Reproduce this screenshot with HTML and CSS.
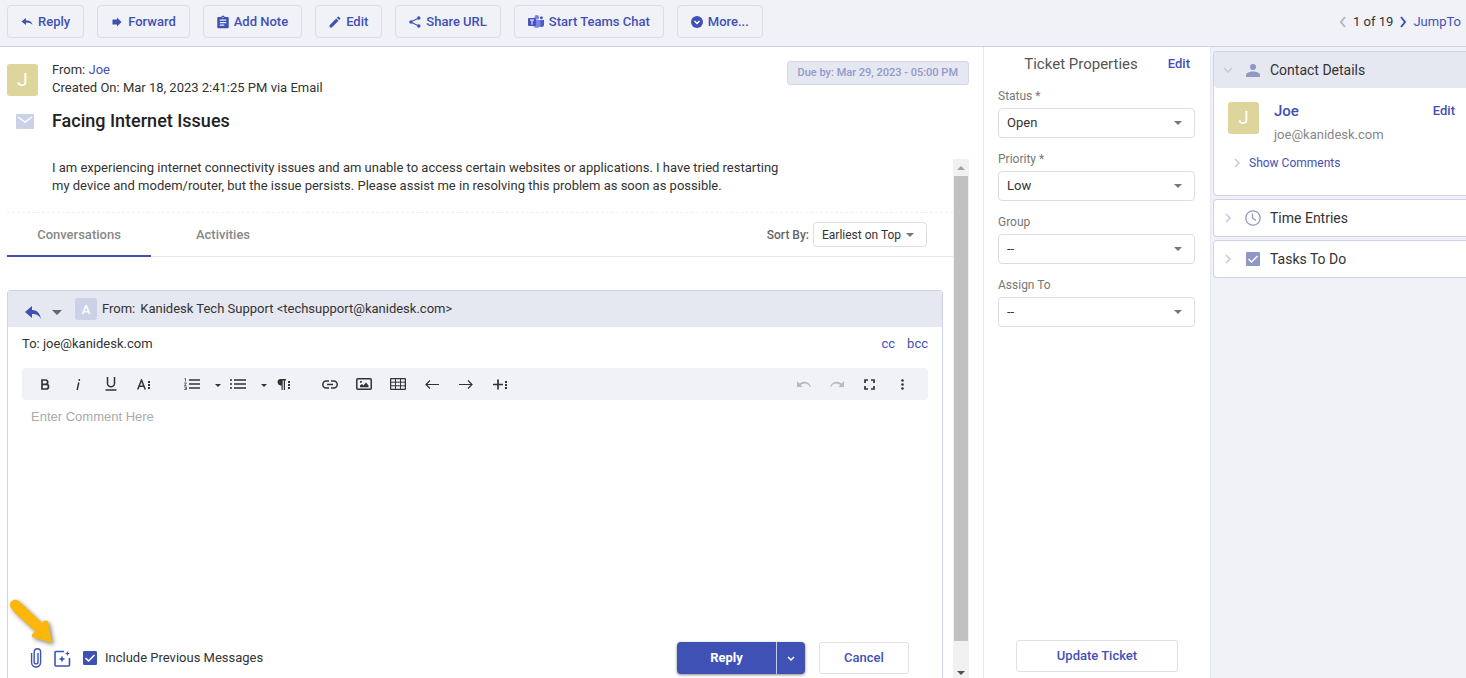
FILE: index.html
```html
<!DOCTYPE html>
<html lang="en">
<head>
    <meta charset="UTF-8">
    <meta name="viewport" content="width=device-width, initial-scale=1.0">
    <title>Facing Internet Issues - Kanidesk</title>
    <link rel="stylesheet" href="styles.css">
</head>
<body>
    <header class="topbar">
        <div class="actions">
            <button class="btn"><svg class="icon" width="12" height="12" viewBox="0 0 24 24"><path d="M10 9V4L1 11l9 7v-5c6 0 10 1.500 13 5-1-5-4-9-13-9z"/></svg>Reply</button>
            <button class="btn"><svg class="icon" width="12" height="12" viewBox="0 0 24 24"><path d="M3 7h9V3l9 9-9 9v-4H3z"/></svg>Forward</button>
            <button class="btn"><svg class="icon" width="12" height="14" viewBox="3 0 18 22"><path d="M19 3h-4.200C14.400 1.800 13.300 1 12 1s-2.400.8-2.800 2H5c-1.100 0-2 .9-2 2v14c0 1.100.9 2 2 2h14c1.100 0 2-.9 2-2V5c0-1.100-.9-2-2-2zm-7 0a1 1 0 1 1 0 2 1 1 0 0 1 0-2zm2 14H7v-2h7v2zm3-4H7v-2h10v2zm0-4H7V7h10v2z"/></svg>Add Note</button>
            <button class="btn"><svg class="icon" width="12" height="12" viewBox="2 2 20 20"><path d="M3 17.250V21h3.750L17.810 9.940l-3.750-3.750L3 17.250zM20.710 7.040a1 1 0 0 0 0-1.410l-2.340-2.340a1 1 0 0 0-1.410 0l-1.830 1.830 3.750 3.750 1.830-1.830z"/></svg>Edit</button>
            <button class="btn"><svg class="icon" width="12" height="12" viewBox="1 1 22 22"><path d="M4 12L19 4.500M4 12l15 7.500" stroke="currentColor" stroke-width="2"/><circle cx="4.500" cy="12" r="3"/><circle cx="19" cy="4.800" r="3.200"/><circle cx="19" cy="19.200" r="3.200"/></svg>Share URL</button>
            <button class="btn"><svg class="icon teams" width="16" height="14" viewBox="0 0 16 14"><circle cx="13.400" cy="2.800" r="1.500" fill="#5059c9"/><path d="M11 5h5v4.500a2.500 2.500 0 0 1-5 0z" fill="#5059c9"/><circle cx="8.800" cy="2.300" r="2.300" fill="#7b83eb"/><path d="M5 5h7.500v5a3.900 3.900 0 0 1-7.500 0z" fill="#7b83eb"/><rect y="3" width="8" height="8" rx="1" fill="#4b53bc"/><path d="M2 5h4M4 5v4.500" stroke="#fff"/></svg>Start Teams Chat</button>
            <button class="btn"><svg class="icon" width="12" height="12" viewBox="0 0 12 12"><circle cx="6" cy="6" r="6"/><path d="M3.500 5L6 7.500 8.500 5" fill="none" stroke="#fff" stroke-width="1.500"/></svg>More...</button>
        </div>
        <nav class="pager">
            <button class="plain prev" aria-label="Previous ticket"><svg width="8" height="12" viewBox="0 0 8 12"><path d="M6 1L2 6l4 5"/></svg></button>
            <span>1 of 19</span>
            <button class="plain next" aria-label="Next ticket"><svg width="8" height="12" viewBox="0 0 8 12"><path d="M2 1l4 5-4 5"/></svg></button>
            <a href="#">JumpTo</a>
        </nav>
    </header>

    <div class="page">
        <main class="ticket">
            <div class="ticket-head">
                <div class="avatar">J</div>
                <div class="ticket-meta">
                    <div>From: <a href="#">Joe</a></div>
                    <div>Created On: Mar 18, 2023 2:41:25 PM via Email</div>
                </div>
                <span class="due">Due by: Mar 29, 2023 - 05:00 PM</span>
            </div>
            <div class="ticket-title">
                <svg width="18" height="15" viewBox="0 0 18 15"><rect width="18" height="15" rx="1" fill="#cdd1e8"/><path d="M2 3l7 5 7-5" fill="none" stroke="#fff" stroke-width="1.500"/></svg>
                <h1>Facing Internet Issues</h1>
            </div>

            <div class="scroll-area">
                <div class="scroll-content">
                    <p class="description">I am experiencing internet connectivity issues and am unable to access certain websites or applications. I have tried restarting my device and modem/router, but the issue persists. Please assist me in resolving this problem as soon as possible.</p>

                    <div class="tabs">
                        <button class="tab active">Conversations</button>
                        <button class="tab">Activities</button>
                        <div class="sort">
                            <label for="sort">Sort By:</label>
                            <div class="select sort-select">
                                <select id="sort"><option>Earliest on Top</option></select>
                                <svg width="8" height="4" viewBox="0 0 8 4"><path d="M0 0h8L4 4z"/></svg>
                            </div>
                        </div>
                    </div>

                    <section class="composer">
                        <div class="composer-head">
                            <button class="plain" aria-label="Reply type"><svg width="16" height="13" viewBox="0 0 16 13" fill="#3f51b5"><path d="M7 4V0L0 6l7 6V8c4 0 7 1 9 5-1-5-3-9-9-9z"/></svg></button>
                            <button class="plain" aria-label="Choose reply type"><svg width="10" height="5" viewBox="0 0 10 5" fill="#666"><path d="M0 0h10L5 5z"/></svg></button>
                            <div class="agent">A</div>
                            <span>From:</span>
                            <span>Kanidesk Tech Support &lt;techsupport@kanidesk.com&gt;</span>
                        </div>
                        <div class="composer-to">
                            <span>To: joe@kanidesk.com</span>
                            <a href="#" class="cc">cc</a>
                            <a href="#">bcc</a>
                        </div>

                        <div class="toolbar">
                            <div class="tools">
                                <button aria-label="Bold"><svg width="10" height="11" viewBox="0 0 10 11" fill="none" stroke="#333" stroke-width="1.700"><path d="M2 1h3.500a2.200 2.200 0 0 1 0 4.400H2zM2 5.400h4.200a2.300 2.300 0 0 1 0 4.600H2z"/></svg></button>
                                <button aria-label="Italic"><svg width="6" height="11" viewBox="0 0 6 11" fill="none" stroke="#333" stroke-width="1.500"><path d="M3.800 3.500L2.200 11M4.500 0L4.100 1.800"/></svg></button>
                                <button aria-label="Underline"><svg width="12" height="14" viewBox="0 0 12 14" fill="none" stroke="#333" stroke-width="1.500"><path d="M2.500 0v6.200a3.500 3.500 0 0 0 7 0V0M.5 13h11"/></svg></button>
                                <button aria-label="More text"><svg width="14" height="11" viewBox="0 0 14 11" fill="none" stroke="#333" stroke-width="1.500"><path d="M.7 10.500L4.500 1 8.300 10.500M2 7.300h5"/><path d="M11 3h2M11 6h2M11 9h2" stroke-width="2"/></svg></button>
                            </div>
                            <div class="tools lists">
                                <button aria-label="Ordered list"><svg width="16" height="12" viewBox="0 0 16 12" fill="none" stroke="#333"><path d="M5 2h11M5 6h11M5 10h11" stroke-width="1.500"/><path d="M.5.500h1v3M0 5h2.500L.5 7.500h2M0 9h2.500v2.500H0M1 10.300h1.500" stroke-width=".7"/></svg></button>
                                <button class="caret" aria-label="Ordered list style"><svg width="6" height="3" viewBox="0 0 6 3"><path d="M0 0h6L3 3z"/></svg></button>
                                <button aria-label="Unordered list"><svg width="16" height="12" viewBox="0 0 16 12" stroke="#333"><path d="M4 2h12M4 6h12M4 10h12M0 2h2M0 6h2M0 10h2" stroke-width="1.500"/></svg></button>
                                <button class="caret" aria-label="Unordered list style"><svg width="6" height="3" viewBox="0 0 6 3"><path d="M0 0h6L3 3z"/></svg></button>
                                <button class="para" aria-label="More paragraph"><svg width="14" height="11" viewBox="0 0 14 11"><path d="M3.200 0H9v1.500H8V11H6.800V1.500H5.700V11H4.500V6.400A3.200 3.200 0 0 1 3.200 0z"/><path d="M11 2h2v2h-2zM11 5h2v2h-2zM11 8h2v2h-2z"/></svg></button>
                            </div>
                            <div class="tools insert">
                                <button aria-label="Insert link"><svg width="16" height="9" viewBox="0 0 16 9" fill="none" stroke="#333" stroke-width="1.500"><path d="M7 1H4.300a3.400 3.400 0 0 0 0 7H7M9 1h2.700a3.400 3.400 0 0 1 0 7H9M5 4.500h6"/></svg></button>
                                <button aria-label="Insert image"><svg width="16" height="12" viewBox="0 0 16 12"><rect x=".75" y=".75" width="14.500" height="10.500" rx="1" fill="none" stroke="#333" stroke-width="1.500"/><path d="M4 9.200V7.500L6 6l1.500 1.500L10 4.500l2.500 3v1.700z"/><path d="M4 3h1.800v1.800H4z"/></svg></button>
                                <button aria-label="Insert table"><svg width="16" height="12" viewBox="0 0 16 12" fill="none" stroke="#333"><rect x=".6" y=".6" width="14.800" height="10.800" rx="1" stroke-width="1.300"/><path d="M0 4.200h16M0 7.800h16M5.500 0v12M10.500 0v12"/></svg></button>
                                <button aria-label="Left to right"><svg width="14" height="9" viewBox="0 0 14 9" fill="none" stroke="#333" stroke-width="1.200"><path d="M1 4.500h13M5 .5l-4 4 4 4"/></svg></button>
                                <button aria-label="Right to left"><svg width="14" height="9" viewBox="0 0 14 9" fill="none" stroke="#333" stroke-width="1.200"><path d="M0 4.500h13M9 .5l4 4-4 4"/></svg></button>
                                <button aria-label="More rich"><svg width="15" height="11" viewBox="0 0 15 11" fill="none" stroke="#333" stroke-width="1.700"><path d="M0 5.500h10M5 .5v10"/><path d="M12 3h2M12 6h2M12 9h2" stroke-width="2"/></svg></button>
                            </div>
                            <div class="tools tools-right">
                                <button disabled aria-label="Undo"><svg width="14" height="6" viewBox="0 0 14 6"><path d="M0 0v6h5.500L3.600 4C7 1.500 11 2 13 6l1-.5C12 .5 6.500-.8 2.400 2.600z"/></svg></button>
                                <button disabled aria-label="Redo"><svg width="14" height="6" viewBox="0 0 14 6"><path d="M14 0v6H8.500l1.900-2C7 1.500 3 2 1 6L0 5.500C2 .5 7.500-.8 11.600 2.600z"/></svg></button>
                                <button aria-label="Fullscreen"><svg width="11" height="11" viewBox="0 0 11 11" fill="none" stroke="#333" stroke-width="1.700"><path d="M1 4V1h3M7 1h3v3M10 7v3H7M4 10H1V7"/></svg></button>
                                <button aria-label="More misc"><svg width="3" height="11" viewBox="0 0 3 11"><circle cx="1.500" cy="1.500" r="1.300"/><circle cx="1.500" cy="5.500" r="1.300"/><circle cx="1.500" cy="9.500" r="1.300"/></svg></button>
                            </div>
                        </div>
                        <textarea class="comment" placeholder="Enter Comment Here" aria-label="Comment"></textarea>

                        <div class="composer-foot">
                            <button class="plain" aria-label="Attach file"><svg width="12" height="20" viewBox="0 0 12 20" fill="none" stroke="#3f51b5" stroke-width="1.400"><path d="M8 5v9a1.900 1.900 0 0 1-3.800 0V4a3.200 3.200 0 0 1 6.400 0v10.500a4.500 4.500 0 0 1-9 0V5"/></svg></button>
                            <button class="plain ai" aria-label="AI assistant">
                                <svg width="17" height="17" viewBox="0 0 17 17" fill="#3f51b5"><path d="M10 1.500H2a1 1 0 0 0-1 1V15a1 1 0 0 0 1 1h12.500a1 1 0 0 0 1-1V8" fill="none" stroke="#3f51b5" stroke-width="1.600"/><path d="M8 5.500l1 2.500 2.500 1L9 10l-1 2.500L7 10 4.500 9 7 8zM13.500 1l.7 1.800 1.800.7-1.800.7-.7 1.800-.7-1.800-1.800-.7 1.800-.7z"/></svg>
                                <!-- pointer to the AI button -->
                                <svg class="pointer" width="48" height="46" viewBox="0 0 48 46"><path d="M3 9C0 5 4 0 8 1c2 0 4 2 6 4l20 19c1-3 4-3 6-2l4 22-20-6c-1-2 1-5 4-5L8 15z" fill="#fdb70b"/></svg>
                            </button>
                            <label class="include">
                                <input type="checkbox" checked>
                                <svg width="14" height="14" viewBox="0 0 14 14" fill="none" stroke="#fff" stroke-width="1.500"><path d="M2.500 7l3 3 6-6"/></svg>
                                Include Previous Messages
                            </label>
                            <div class="split">
                                <button class="reply">Reply</button>
                                <button class="reply-more" aria-label="More reply options"><svg width="8" height="6" viewBox="0 0 8 6" fill="none" stroke="#fff" stroke-width="1.500"><path d="M1 1l3 3 3-3"/></svg></button>
                            </div>
                            <button class="btn-white cancel">Cancel</button>
                        </div>
                    </section>
                </div>
                <div class="scrollbar">
                    <svg width="8" height="4" viewBox="0 0 8 4" fill="#a3a3a3"><path d="M0 4h8L4 0z"/></svg>
                    <div class="thumb"></div>
                    <svg width="8" height="4" viewBox="0 0 8 4" fill="#505050"><path d="M0 0h8L4 4z"/></svg>
                </div>
            </div>
        </main>

        <aside class="properties">
            <div class="properties-head">
                <h2>Ticket Properties</h2>
                <a href="#">Edit</a>
            </div>
            <div class="field">
                <label for="status">Status *</label>
                <div class="select">
                    <select id="status"><option>Open</option></select>
                    <svg width="8" height="4" viewBox="0 0 8 4"><path d="M0 0h8L4 4z"/></svg>
                </div>
            </div>
            <div class="field">
                <label for="priority">Priority *</label>
                <div class="select">
                    <select id="priority"><option>Low</option></select>
                    <svg width="8" height="4" viewBox="0 0 8 4"><path d="M0 0h8L4 4z"/></svg>
                </div>
            </div>
            <div class="field">
                <label for="group">Group</label>
                <div class="select">
                    <select id="group"><option>--</option></select>
                    <svg width="8" height="4" viewBox="0 0 8 4"><path d="M0 0h8L4 4z"/></svg>
                </div>
            </div>
            <div class="field">
                <label for="assign">Assign To</label>
                <div class="select">
                    <select id="assign"><option>--</option></select>
                    <svg width="8" height="4" viewBox="0 0 8 4"><path d="M0 0h8L4 4z"/></svg>
                </div>
            </div>
            <button class="btn-white update">Update Ticket</button>
        </aside>

        <aside class="sidebar">
            <section class="card">
                <button class="card-head open">
                    <svg class="chev" width="10" height="6" viewBox="0 0 10 6"><path d="M1 1l4 4 4-4"/></svg>
                    <svg width="16" height="13" viewBox="0 0 16 13" fill="#8f97c9"><circle cx="8" cy="3" r="3"/><path d="M1 13v-2c0-2 4-3.500 7-3.500s7 1.500 7 3.500v2z"/></svg>
                    Contact Details
                </button>
                <div class="contact">
                    <div class="avatar">J</div>
                    <div class="contact-info">
                        <a href="#" class="name">Joe</a>
                        <div class="email">joe@kanidesk.com</div>
                    </div>
                    <a href="#" class="contact-edit">Edit</a>
                </div>
                <button class="plain comments">
                    <svg class="chev" width="6" height="10" viewBox="0 0 6 10"><path d="M1 1l4 4-4 4"/></svg>
                    Show Comments
                </button>
            </section>
            <section class="card">
                <button class="card-head">
                    <svg class="chev" width="10" height="10" viewBox="-2 0 10 10"><path d="M1 1l4 4-4 4"/></svg>
                    <svg width="16" height="16" viewBox="0 0 16 16" fill="none" stroke="#8f97c9" stroke-width="1.300"><circle cx="8" cy="8" r="7.200"/><path d="M7.500 3.500V8l3.500 2.500"/></svg>
                    Time Entries
                </button>
            </section>
            <section class="card">
                <button class="card-head">
                    <svg class="chev" width="10" height="10" viewBox="-2 0 10 10"><path d="M1 1l4 4-4 4"/></svg>
                    <svg width="16" height="16" viewBox="0 0 16 16"><rect x="1" y="1" width="14" height="14" rx="1" fill="#8f97c9"/><path d="M3.500 8l3 3 6-6" fill="none" stroke="#fff" stroke-width="1.500"/></svg>
                    Tasks To Do
                </button>
            </section>
        </aside>
    </div>
</body>
</html>
```
FILE: styles.css
```css
* {
    box-sizing: border-box;
}
body {
    display: flex;
    flex-direction: column;
    height: 100vh;
    margin: 0;
    overflow: hidden;
    background-color: #fff;
    color: #333;
    font-family: Roboto, Arial, sans-serif;
    font-size: 13px;
    line-height: 18px;
}
button, select, textarea, input {
    font: inherit;
    color: inherit;
    margin: 0;
}
button {
    cursor: pointer;
}
a {
    color: #3f51b5;
    text-decoration: none;
}
h1, h2, p {
    margin: 0;
}
svg {
    flex: none;
}
.plain {
    display: flex;
    align-items: center;
    padding: 0;
    border: none;
    background: none;
}

/* top bar */
.topbar {
    display: flex;
    justify-content: space-between;
    flex: none;
    height: 47px;
    padding: 5px 5px 0 7px;
    background-color: #f1f2f7;
    border-bottom: 1px solid #cdd0e8;
}
.actions {
    display: flex;
    gap: 13px;
}
.btn {
    display: flex;
    align-items: center;
    gap: 5px;
    height: 33px;
    padding: 0 13px;
    border: 1px solid #dcdde3;
    border-radius: 4px;
    background: none;
    color: #3f51b5;
    font-weight: 500;
}
.icon {
    fill: currentColor;
}
.pager {
    display: flex;
    align-items: center;
    gap: 6px;
    height: 33px;
}
.pager svg {
    fill: none;
    stroke-width: 2;
}
.prev {
    stroke: #b5b7c0;
}
.next {
    stroke: #3f51b5;
}

.page {
    display: flex;
    flex: 1;
    min-height: 0;
}

/* ticket */
.ticket {
    display: flex;
    flex-direction: column;
    flex: 1;
    min-width: 0;
    padding: 14px 14px 0 7px;
}
.ticket-head {
    display: flex;
    align-items: flex-start;
}
.avatar {
    width: 31px;
    height: 32px;
    border-radius: 3px;
    background-color: #ddd59b;
    color: #fff;
    font-size: 19px;
    line-height: 32px;
    text-align: center;
}
.ticket-head .avatar {
    margin: 3px 14px 0 0;
}
.due {
    margin-left: auto;
    padding: 2px 10px;
    border: 1px solid #d3d7eb;
    border-radius: 3px;
    background-color: #e5e7f1;
    color: #9299cc;
    font-size: 11px;
    line-height: 18px;
    font-weight: 500;
}
.ticket-title {
    display: flex;
    align-items: center;
    gap: 18px;
    height: 48px;
    padding-left: 9px;
}
.ticket-title h1 {
    color: #222;
    font-size: 18px;
    font-weight: 500;
}
.scroll-area {
    display: flex;
    flex: 1;
    min-height: 0;
    margin-top: 14px;
}
.scroll-content {
    display: flex;
    flex-direction: column;
    flex: 1;
    min-width: 0;
}
.scrollbar {
    display: flex;
    flex-direction: column;
    align-items: center;
    gap: 6px;
    width: 16px;
    padding: 7px 1px 3px;
    background-color: #f1f1f1;
}
.thumb {
    flex: 1;
    width: 100%;
    margin-bottom: 24px;
    background-color: #c1c1c1;
}
.description {
    max-width: 780px;
    padding: 0 0 17px 45px;
}

/* tabs */
.tabs {
    display: flex;
    flex: none;
    height: 45px;
    border-top: 1px dashed #eeeff4;
    border-bottom: 1px solid #e8e8ec;
}
.tab {
    width: 144px;
    padding: 0;
    border: none;
    background: none;
    color: #888;
    font-weight: 500;
}
.tab.active {
    height: 44px;
    padding-top: 2px;
    border-bottom: 2px solid #3f51b5;
}
.sort {
    display: flex;
    align-items: center;
    gap: 4px;
    margin-left: auto;
    padding-right: 26px;
    font-size: 12px;
    font-weight: 500;
}
.sort label {
    color: #666;
}

/* drop-downs: the arrow shares the grid cell of the select */
.select {
    display: grid;
    align-items: center;
}
.select select {
    grid-area: 1 / 1;
    width: 100%;
    height: 30px;
    padding: 0 8px;
    border: 1px solid #dedee2;
    border-radius: 4px;
    background: #fff;
    appearance: none;
}
.select svg {
    grid-area: 1 / 1;
    justify-self: end;
    margin-right: 13px;
    fill: #777;
    pointer-events: none;
}
.select.sort-select select {
    height: 25px;
    padding-right: 24px;
    font-weight: 400;
}

/* composer */
.composer {
    display: flex;
    flex-direction: column;
    flex: 1;
    min-height: 0;
    margin: 33px 10px 0 0;
    border: 1px solid #cdd1ea;
    border-bottom: none;
    border-radius: 4px 4px 0 0;
}
.composer-head {
    display: flex;
    align-items: center;
    height: 36px;
    padding-left: 17px;
    background-color: #e5e7f1;
    gap: 5px;
}
.composer-head .plain {
    padding: 6px 6px 0 0;
}
.agent {
    width: 22px;
    height: 22px;
    margin-left: 2px;
    border-radius: 3px;
    background-color: #cdd1e8;
    color: #fff;
    font-weight: 500;
    line-height: 23px;
    text-align: center;
}
.composer-to {
    display: flex;
    gap: 12px;
    padding: 8px 14px 15px;
}
.cc {
    margin-left: auto;
}
.toolbar {
    display: flex;
    flex: none;
    height: 32px;
    margin: 0 14px;
    padding: 0 9px 0 6px;
    border-radius: 4px;
    background-color: #f1f2f7;
}
.tools {
    display: flex;
}
.tools button {
    display: flex;
    align-items: center;
    justify-content: center;
    width: 33px;
    padding: 0;
    border: none;
    background: none;
    fill: #333;
}
.tools button:disabled {
    fill: #bbb;
}
.lists {
    margin-left: 20px;
}
.lists button {
    width: 24px;
}
.tools .caret {
    width: 16px;
    margin-left: 6px;
    padding-top: 3px;
}
.insert {
    margin-left: 17px;
}
.insert button {
    width: 34px;
}
.tools-right {
    margin-left: auto;
}
.comment {
    flex: 1;
    min-height: 0;
    margin: 0 14px;
    padding: 8px 9px;
    border: none;
    outline: none;
    resize: none;
}
.comment::placeholder {
    color: #aaa;
    font-family: "Liberation Sans", Arial, sans-serif;
}
.composer-foot {
    display: flex;
    align-items: center;
    height: 32px;
    margin: 0 33px 4px 22px;
}
.ai {
    position: relative;
    margin: 0 12px;
}
.pointer {
    position: absolute;
    right: 15px;
    bottom: 22px;
    filter: drop-shadow(2px 2px 2px #888);
    pointer-events: none;
}
/* the tick shares the grid cell of the box */
.include {
    display: grid;
    grid-template-columns: 14px auto;
    align-items: center;
    column-gap: 8px;
}
.include input {
    grid-area: 1 / 1;
    width: 14px;
    height: 14px;
    border: 1px solid #3f51b5;
    border-radius: 1px;
    appearance: none;
}
.include input:checked {
    background-color: #3f51b5;
}
.include svg {
    grid-area: 1 / 1;
    z-index: 1;
    pointer-events: none;
}
.split {
    display: flex;
    height: 32px;
    margin: 0 14px 0 auto;
    border-radius: 4px;
    background-color: #3f51b5;
    box-shadow: 0 1px 3px #888;
}
.split button {
    padding: 0;
    border: none;
    background: none;
    color: #fff;
}
.split .reply {
    width: 99px;
    font-weight: 700;
}
.split .reply-more {
    width: 29px;
    border-left: 1px solid #c5cae9;
}
.btn-white {
    height: 32px;
    border: 1px solid #e0e1e6;
    border-radius: 3px;
    background-color: #fff;
    color: #3f51b5;
    font-weight: 500;
}
.cancel {
    width: 90px;
}

/* ticket properties */
.properties {
    display: flex;
    flex-direction: column;
    flex: none;
    gap: 12px;
    width: 227px;
    padding: 8px 15px 6px 14px;
    border-left: 1px solid #e6e7ec;
}
.properties-head {
    display: flex;
    justify-content: flex-end;
    gap: 30px;
    padding: 0 5px 2px 0;
}
.properties-head h2 {
    color: #555;
    font-size: 15px;
    font-weight: 400;
}
.properties-head a {
    font-weight: 500;
}
.field {
    display: flex;
    flex-direction: column;
    gap: 3px;
}
.field label {
    color: #777;
    font-size: 12px;
}
.update {
    width: 162px;
    margin: auto auto 0 18px;
}

/* right column */
.sidebar {
    display: flex;
    flex-direction: column;
    flex: none;
    gap: 3px;
    width: 256px;
    padding: 4px 0 0 2px;
    border-left: 1px solid #e5e7f1;
    background-color: #f1f2f7;
}
.card {
    border: 1px solid #cdd1ea;
    border-right: none;
    border-radius: 4px 0 0 4px;
    background-color: #fff;
}
.card-head {
    display: flex;
    align-items: center;
    gap: 9px;
    width: 100%;
    height: 36px;
    padding: 0 9px;
    border: none;
    border-radius: 4px 0 0 4px;
    background: none;
    font-size: 14px;
    line-height: 18px;
}
.card-head.open {
    background-color: #e5e7f1;
}
.chev {
    fill: none;
    stroke: #c5c9e3;
    stroke-width: 1.5px;
}
.card-head .chev {
    margin-right: 3px;
}
.contact {
    display: flex;
    align-items: flex-start;
    padding: 14px 11px 0 14px;
}
.contact-info {
    flex: 1;
    padding-left: 15px;
}
.name {
    font-size: 15px;
    font-weight: 500;
}
.email {
    margin-top: 5px;
    color: #888;
}
.contact-edit {
    font-weight: 500;
}
.comments {
    gap: 9px;
    padding: 10px 0 23px 20px;
    color: #3f51b5;
    font-size: 12px;
}
```
